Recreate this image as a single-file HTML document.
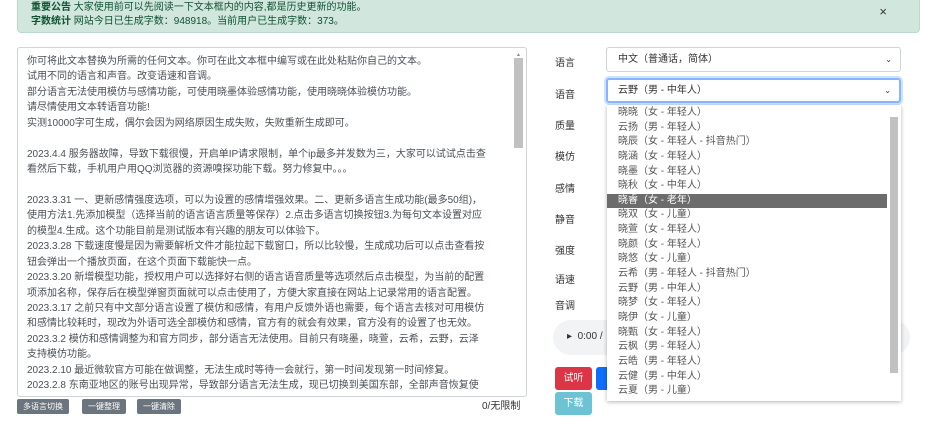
<!DOCTYPE html>
<html><head><meta charset="utf-8"><style>
*{box-sizing:border-box;margin:0;padding:0}
body{width:935px;height:426px;overflow:hidden;background:#fff;font-family:"Liberation Sans","Noto Sans CJK SC",sans-serif;color:#212529;position:relative}
.alert{position:absolute;left:17px;top:-6px;width:903px;height:39px;background:#d1e7dd;border:1px solid #badbcc;border-radius:4px;color:#0f5132;font-size:10px;padding:6px 0 0 13px;line-height:14px}
.alert b{font-weight:bold}
.x{position:absolute;right:32px;top:10px;font-size:13px;color:#333}
.ta{position:absolute;left:17px;top:47px;width:510px;height:350px;border:1px solid #ced4da;border-radius:3px;overflow:hidden;font-size:10px;color:#495057;padding:6px 0 0 9px;line-height:15.45px;white-space:nowrap}
.ta p{height:15.45px}
.sb{position:absolute;left:496px;top:10px;width:9px;height:90px;background:#c1c1c1}
.sbt{position:absolute;left:498px;top:0px;font-size:5px;color:#888}
.btn{position:absolute;top:399px;height:15px;background:#6c757d;color:#fff;font-size:8px;line-height:15px;padding:0 6px;border-radius:2px}
.cnt{position:absolute;left:482px;top:397px;font-size:10px;color:#333}
.lab{position:absolute;left:555px;font-size:10px;color:#333}
.sel{position:absolute;left:606px;width:295px;height:25px;border:1px solid #ced4da;border-radius:3px;font-size:10px;padding:0 0 0 11px;line-height:23px;color:#333}
.sel span{position:absolute;right:8px;top:0;font-size:8px}
.dd{position:absolute;left:607px;top:105px;width:294px;height:296px;background:#fff;box-shadow:0 1px 4px rgba(0,0,0,.3);font-size:10px;color:#555;padding-top:1px}
.dd p{height:14.65px;line-height:14.65px;padding-left:11px;width:280px}
.dd .hl{background:#6c6c6c;color:#fff}
.dds{position:absolute;right:3px;top:12px;width:8px;height:256px;background:#c1c1c1}
.player{position:absolute;left:553px;top:320px;width:357px;height:35px;border-radius:18px;background:#f1f3f4;font-size:10px;color:#333;padding:11px 0 0 14px}
.b2{position:absolute;height:23px;font-size:10px;color:#fff;line-height:23px;text-align:center;border-radius:3px}
</style></head><body>
<div class="alert"><div><b>重要公告</b> 大家使用前可以先阅读一下文本框内的内容,都是历史更新的功能。</div><div><b>字数统计</b> 网站今日已生成字数：948918。当前用户已生成字数：373。</div><span class="x">×</span></div>
<div class="ta">
<p>你可将此文本替换为所需的任何文本。你可在此文本框中编写或在此处粘贴你自己的文本。</p>
<p>试用不同的语言和声音。改变语速和音调。</p>
<p>部分语言无法使用模仿与感情功能，可使用晓墨体验感情功能，使用晓晓体验模仿功能。</p>
<p>请尽情使用文本转语音功能!</p>
<p>实测10000字可生成，偶尔会因为网络原因生成失败，失败重新生成即可。</p>
<p>&nbsp;</p>
<p>2023.4.4 服务器故障，导致下载很慢，开启单IP请求限制，单个ip最多并发数为三，大家可以试试点击查</p>
<p>看然后下载，手机用户用QQ浏览器的资源嗅探功能下载。努力修复中。。。</p>
<p>&nbsp;</p>
<p>2023.3.31 一、更新感情强度选项，可以为设置的感情增强效果。二、更新多语言生成功能(最多50组)，</p>
<p>使用方法1.先添加模型（选择当前的语言语言质量等保存）2.点击多语言切换按钮3.为每句文本设置对应</p>
<p>的模型4.生成。这个功能目前是测试版本有兴趣的朋友可以体验下。</p>
<p>2023.3.28 下载速度慢是因为需要解析文件才能拉起下载窗口，所以比较慢，生成成功后可以点击查看按</p>
<p>钮会弹出一个播放页面，在这个页面下载能快一点。</p>
<p>2023.3.20 新增模型功能，授权用户可以选择好右侧的语言语音质量等选项然后点击模型，为当前的配置</p>
<p>项添加名称，保存后在模型弹窗页面就可以点击使用了，方便大家直接在网站上记录常用的语言配置。</p>
<p>2023.3.17 之前只有中文部分语言设置了模仿和感情，有用户反馈外语也需要，每个语言去核对可用模仿</p>
<p>和感情比较耗时，现改为外语可选全部模仿和感情，官方有的就会有效果，官方没有的设置了也无效。</p>
<p>2023.3.2 模仿和感情调整为和官方同步，部分语言无法使用。目前只有晓墨，晓萱，云希，云野，云泽</p>
<p>支持模仿功能。</p>
<p>2023.2.10 最近微软官方可能在做调整，无法生成时等待一会就行，第一时间发现第一时间修复。</p>
<p>2023.2.8 东南亚地区的账号出现异常，导致部分语言无法生成，现已切换到美国东部，全部声音恢复使</p>
<span class="sb"></span><span class="sbt">▲</span>
</div>
<div class="btn" style="left:17px">多语言切换</div>
<div class="btn" style="left:82px">一键整理</div>
<div class="btn" style="left:137px">一键清除</div>
<div class="cnt">0/无限制</div>

<div class="lab" style="top:54px">语言</div>
<div class="lab" style="top:86px">语音</div>
<div class="lab" style="top:117px">质量</div>
<div class="lab" style="top:148px">模仿</div>
<div class="lab" style="top:180px">感情</div>
<div class="lab" style="top:211px">静音</div>
<div class="lab" style="top:242px">强度</div>
<div class="lab" style="top:271px">语速</div>
<div class="lab" style="top:297px">音调</div>
<div class="sel" style="top:47px">中文（普通话，简体）<span>⌄</span></div>
<div class="sel" style="top:78px;border:2px solid #86b7fe;box-shadow:0 0 0 2px #cfe2ff;line-height:21px;padding-left:10px">云野（男 - 中年人）<span>⌄</span></div>
<div class="player">▸ &nbsp;0:00 /</div>
<div class="b2" style="left:555px;top:367px;width:37px;background:#dc3545">试听</div>
<div class="b2" style="left:596px;top:367px;width:20px;background:#0d6efd"></div>
<div class="b2" style="left:555px;top:392px;width:37px;background:#6dc2d4">下载</div>
<div class="dd">
<p>晓晓（女 - 年轻人）</p><p>云扬（男 - 年轻人）</p><p>晓辰（女 - 年轻人 - 抖音热门）</p><p>晓涵（女 - 年轻人）</p><p>晓墨（女 - 年轻人）</p><p>晓秋（女 - 中年人）</p><p class="hl">晓睿（女 - 老年）</p><p>晓双（女 - 儿童）</p><p>晓萱（女 - 年轻人）</p><p>晓颜（女 - 年轻人）</p><p>晓悠（女 - 儿童）</p><p>云希（男 - 年轻人 - 抖音热门）</p><p>云野（男 - 中年人）</p><p>晓梦（女 - 年轻人）</p><p>晓伊（女 - 儿童）</p><p>晓甄（女 - 年轻人）</p><p>云枫（男 - 年轻人）</p><p>云皓（男 - 年轻人）</p><p>云健（男 - 中年人）</p><p>云夏（男 - 儿童）</p>
<span class="dds"></span>
</div>
</body></html>
